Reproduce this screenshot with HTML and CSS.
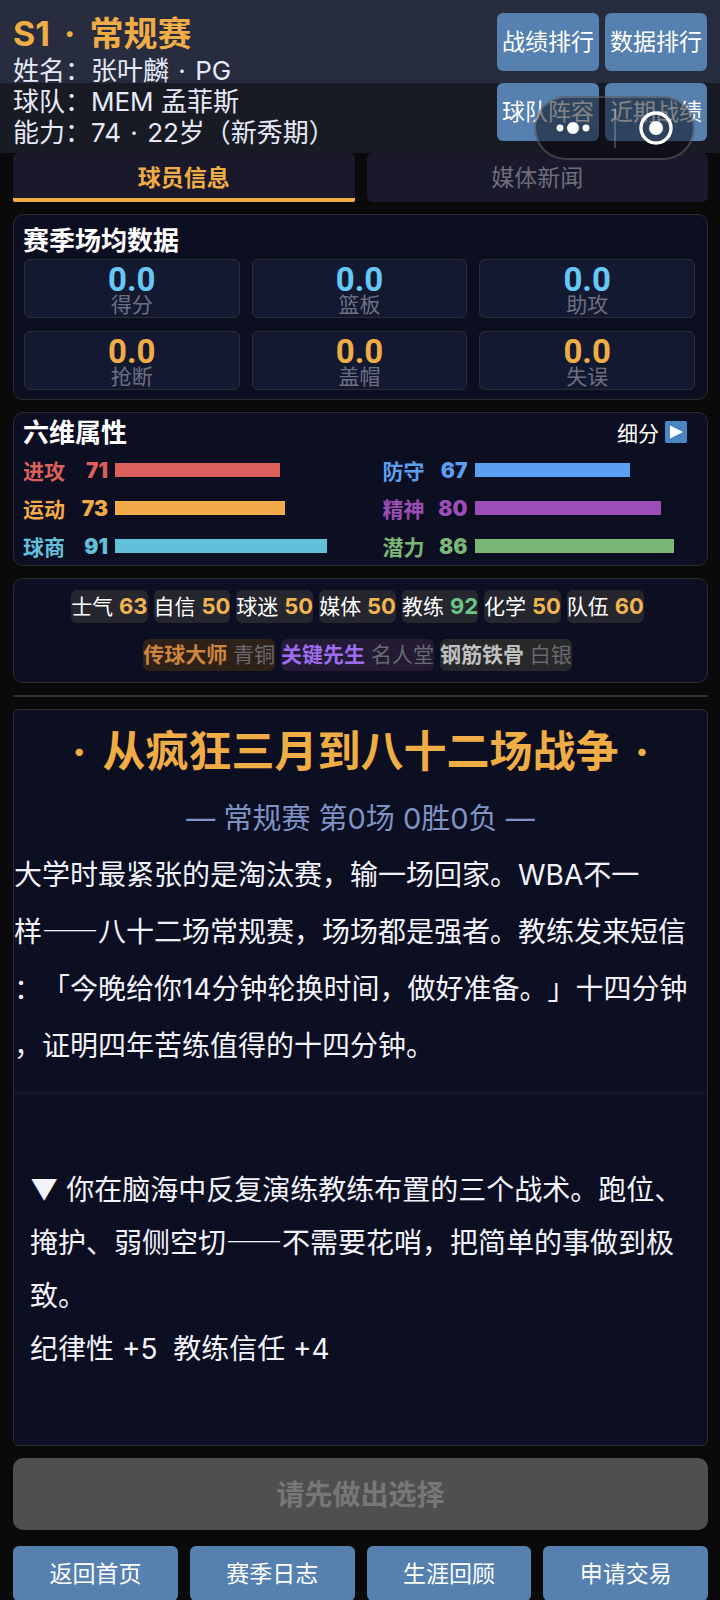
FILE: index.html
```html
<!DOCTYPE html>
<html lang="zh-CN">
<head>
<meta charset="UTF-8">
<meta name="viewport" content="width=device-width, initial-scale=1.0">
<title>S1 · 常规赛</title>
<link rel="stylesheet" href="styles.css">
</head>
<body>

<header class="header">
    <div class="player">
        <h1 class="season">S1 <span class="dot">·</span> 常规赛</h1>
        <p>姓名：张叶麟 <span class="dot">·</span> PG</p>
        <p>球队：MEM 孟菲斯</p>
        <p>能力：74 <span class="dot">·</span> 22岁（新秀期）</p>
    </div>
    <nav class="header-nav">
        <button class="btn">战绩排行</button>
        <button class="btn">数据排行</button>
        <button class="btn">球队阵容</button>
        <button class="btn">近期战绩</button>
    </nav>
    <div class="capsule">
        <button class="capsule-btn" aria-label="更多">
            <svg width="36" height="36" viewBox="0 0 36 36" fill="#fff">
                <circle cx="5" cy="18" r="3.4"/>
                <circle cx="18" cy="18" r="6"/>
                <circle cx="31" cy="18" r="3.4"/>
            </svg>
        </button>
        <span class="capsule-line"></span>
        <button class="capsule-btn" aria-label="关闭">
            <svg width="36" height="36" viewBox="0 0 36 36">
                <circle cx="18" cy="18" r="15" fill="none" stroke="#fff" stroke-width="3.4"/>
                <circle cx="18" cy="18" r="7" fill="#fff"/>
            </svg>
        </button>
    </div>
</header>

<main class="page">
    <div class="tabs">
        <button class="tab active">球员信息</button>
        <button class="tab">媒体新闻</button>
    </div>

    <section class="card stats">
        <h2 class="card-title">赛季场均数据</h2>
        <div class="stat-grid">
            <div class="stat"><b>0.0</b><span>得分</span></div>
            <div class="stat"><b>0.0</b><span>篮板</span></div>
            <div class="stat"><b>0.0</b><span>助攻</span></div>
            <div class="stat minor"><b>0.0</b><span>抢断</span></div>
            <div class="stat minor"><b>0.0</b><span>盖帽</span></div>
            <div class="stat minor"><b>0.0</b><span>失误</span></div>
        </div>
    </section>

    <section class="card attrs">
        <div class="attr-head">
            <h2 class="card-title">六维属性</h2>
            <button class="detail-btn">细分
                <svg width="22" height="22" viewBox="0 0 22 22">
                    <rect width="22" height="22" rx="2" fill="#4a86c4"/>
                    <path d="M5 4.5 L18 11 L5 17.5 Z" fill="#fff"/>
                </svg>
            </button>
        </div>
        <div class="attr-grid">
            <div class="attr red"><span>进攻</span><b>71</b><div class="track"><div class="bar" style="width: 71%"></div></div></div>
            <div class="attr blue"><span>防守</span><b>67</b><div class="track"><div class="bar" style="width: 67%"></div></div></div>
            <div class="attr orange"><span>运动</span><b>73</b><div class="track"><div class="bar" style="width: 73%"></div></div></div>
            <div class="attr purple"><span>精神</span><b>80</b><div class="track"><div class="bar" style="width: 80%"></div></div></div>
            <div class="attr cyan"><span>球商</span><b>91</b><div class="track"><div class="bar" style="width: 91%"></div></div></div>
            <div class="attr green"><span>潜力</span><b>86</b><div class="track"><div class="bar" style="width: 86%"></div></div></div>
        </div>
    </section>

    <section class="card chips">
        <div class="chip-row">
            <span class="chip">士气 <b>63</b></span>
            <span class="chip">自信 <b>50</b></span>
            <span class="chip">球迷 <b>50</b></span>
            <span class="chip">媒体 <b>50</b></span>
            <span class="chip good">教练 <b>92</b></span>
            <span class="chip">化学 <b>50</b></span>
            <span class="chip">队伍 <b>60</b></span>
        </div>
        <div class="chip-row">
            <span class="chip badge bronze"><b>传球大师</b> 青铜</span>
            <span class="chip badge legend"><b>关键先生</b> 名人堂</span>
            <span class="chip badge silver"><b>钢筋铁骨</b> 白银</span>
        </div>
    </section>

    <hr class="divider">

    <article class="card story">
        <h2 class="story-title"><span class="dot">·</span> 从疯狂三月到八十二场战争 <span class="dot">·</span></h2>
        <p class="story-sub">— 常规赛 第0场 0胜0负 —</p>
        <p class="story-text">大学时最紧张的是淘汰赛，输一场回家。WBA不一<br>样<span class="dash">——</span>八十二场常规赛，场场都是强者。教练发来短信<br>：「今晚给你14分钟轮换时间，做好准备。」十四分钟<br>，证明四年苦练值得的十四分钟。</p>
        <div class="choice">
            <p>▼ 你在脑海中反复演练教练布置的三个战术。跑位、掩护、弱侧空切<span class="dash">——</span>不需要花哨，把简单的事做到极致。</p>
            <p>纪律性 +5&nbsp; 教练信任 +4</p>
        </div>
    </article>

    <button class="next-btn" disabled>请先做出选择</button>

    <nav class="bottom-nav">
        <button class="btn">返回首页</button>
        <button class="btn">赛季日志</button>
        <button class="btn">生涯回顾</button>
        <button class="btn">申请交易</button>
    </nav>
</main>

</body>
</html>
```
FILE: styles.css
```css
* {
    box-sizing: border-box;
    margin: 0;
    padding: 0;
}

body {
    font-family: Inter, "Noto Sans CJK SC", sans-serif;
    font-size: 21px;
    color: #f2f3fa;
    background-color: #0a0a0b;
    text-spacing-trim: space-all;
}

button {
    font-family: inherit;
    border: none;
    color: #fff;
    white-space: nowrap;
}

.btn {
    height: 58px;
    padding-bottom: 4px;
    font-size: 23px;
    background-color: #5580b0;
    border-radius: 6px;
}

.dot {
    margin: 0 2px;
}

/* header */
.header {
    position: relative;
    display: flex;
    justify-content: space-between;
    padding: 13px 13px 5px;
    background: linear-gradient(#282c3f 83px, #191b24 83px);
}

.player {
    font-size: 26px;
    line-height: 31px;
    color: #e6eaf8;
}

.season {
    font-size: 34px;
    line-height: 42px;
    color: #f0ad45;
}

.season .dot,
.story-title .dot {
    margin: 0 6px;
}

.header-nav {
    display: grid;
    grid-template-columns: 102px 102px;
    gap: 12px 6px;
    align-content: start;
}

.capsule {
    position: absolute;
    top: 96px;
    right: 25px;
    display: flex;
    align-items: center;
    width: 161px;
    height: 64px;
    border: 2px solid rgba(255, 255, 255, 0.2);
    border-radius: 32px;
    background-color: rgba(8, 8, 12, 0.5);
}

.capsule-btn {
    flex: 1;
    height: 36px;
    background: none;
}

.capsule-line {
    width: 2px;
    height: 40px;
    margin: 0 4px;
    background-color: rgba(255, 255, 255, 0.2);
}

/* tabs */
.page {
    display: flex;
    flex-direction: column;
    padding: 0 12px 0 13px;
}

.tabs {
    display: grid;
    grid-template-columns: 1fr 1fr;
    gap: 12px;
    margin-bottom: 12px;
}

.tab {
    height: 49px;
    font-size: 23px;
    color: #6d6d7c;
    background-color: #19192b;
    border-bottom: 4px solid transparent;
    border-radius: 6px;
}

.tab.active {
    font-weight: bold;
    color: #f0ad45;
    border-bottom-color: #f0ad45;
    border-radius: 6px 6px 2px 2px;
}

/* cards */
.card {
    margin-bottom: 12px;
    background-color: #0c0e22;
    border: 1px solid #2c2b30;
    border-radius: 10px;
}

.card-title {
    font-size: 26px;
    line-height: 36px;
    color: #fff;
}

.stats {
    padding: 8px 12px 9px 9px;
}

.stat-grid {
    display: grid;
    grid-template-columns: repeat(3, 1fr);
    gap: 13px 12px;
    margin-left: 1px;
}

.stat {
    display: flex;
    flex-direction: column;
    align-items: center;
    padding: 6px 0 1px;
    line-height: 22px;
    color: #6d6f80;
    background-color: #141932;
    border: 1px solid #2d2d38;
    border-radius: 6px;
}

.stat b {
    font-family: Roboto, sans-serif;
    font-size: 33px;
    line-height: 28px;
    color: #66c8f5;
}

.stat.minor b {
    color: #f0ad45;
}

/* attributes */
.attr-head {
    display: flex;
    justify-content: space-between;
    padding: 2px 20px 0 9px;
}

.detail-btn {
    display: flex;
    align-items: center;
    gap: 6px;
    padding-bottom: 2px;
    font-size: 21px;
    background: none;
}

.attr-grid {
    display: grid;
    grid-template-columns: 1fr 1fr;
    column-gap: 26px;
}

.attr {
    display: flex;
    align-items: center;
    height: 38px;
    padding-left: 9px;
    font-weight: bold;
}

.attr b {
    width: 43px;
    margin-right: 7px;
    text-align: right;
}

.track {
    flex: 1;
}

.bar {
    height: 14px;
    background-color: currentColor;
}

.red { color: #dd5f5b; }
.blue { color: #5ba0f0; }
.orange { color: #f3aa48; }
.purple { color: #9c4db6; }
.cyan { color: #62c0da; }
.green { color: #7ab774; }

/* status chips */
.chips {
    display: flex;
    flex-direction: column;
    gap: 16px;
    padding: 11px 0;
}

.chip-row {
    display: flex;
    justify-content: center;
}

.chip {
    margin-right: 6px;
    line-height: 32px;
    color: #fff;
    background-color: #25262e;
    border-radius: 6px;
    white-space: nowrap;
}

.chip b {
    font-size: 22px;
    color: #f3b452;
}

.chip.good b {
    color: #6dc488;
}

.chip.badge {
    color: #6a6a70;
}

.chip.badge b {
    font-size: 21px;
}

.chip.bronze { background-color: #2d2118; }
.chip.bronze b { color: #cd853f; }
.chip.legend { background-color: #231a34; }
.chip.legend b { color: #9f6cf0; }
.chip.silver { background-color: #272829; }
.chip.silver b { color: #c0c0c0; }

.divider {
    margin-bottom: 12px;
    border: none;
    border-top: 2px solid #2e2e31;
}

/* story */
.story {
    padding-top: 11px;
    font-size: 28px;
    border-radius: 6px;
}

.story-title {
    margin-bottom: 12px;
    font-size: 43px;
    line-height: 60px;
    text-align: center;
    color: #f0ad45;
}

.story-sub {
    margin-bottom: 2px;
    font-size: 29px;
    line-height: 52px;
    text-align: center;
    color: #7f93c4;
}

.story-text {
    padding-bottom: 17px;
    line-height: 57px;
    border-bottom: 2px solid #15182b;
    white-space: nowrap;
}

.dash {
    font-family: "Noto Sans CJK SC", sans-serif;
    line-height: 1;
}

.choice {
    padding: 70px 16px 69px;
    line-height: 53px;
}

/* footer buttons */
.next-btn {
    height: 72px;
    margin-bottom: 16px;
    padding-bottom: 2px;
    font-size: 28px;
    font-weight: bold;
    color: #777;
    background-color: #4f4f4f;
    border-radius: 10px;
}

.bottom-nav {
    display: grid;
    grid-template-columns: repeat(4, 1fr);
    gap: 12px;
}

.bottom-nav .btn {
    height: 55px;
}
```
